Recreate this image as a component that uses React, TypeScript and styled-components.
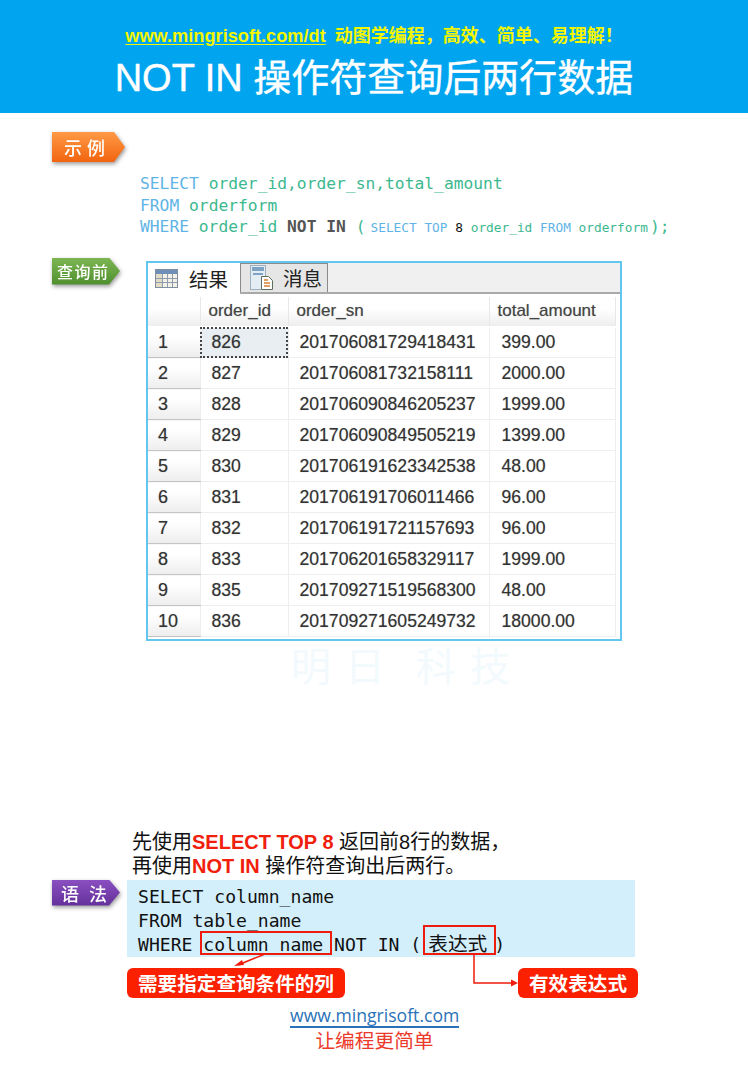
import React from 'react'
import styled, { createGlobalStyle } from 'styled-components'

const sans = `"Liberation Sans", "Noto Sans CJK SC", sans-serif`
const mono = `"DejaVu Sans Mono", "Noto Sans CJK SC", monospace`

const GlobalStyle = createGlobalStyle`
  html, body {
    margin: 0;
    padding: 0;
    background: #fff;
    font-family: ${sans};
  }
`

const Page = styled.div`
  width: 748px;
  height: 1080px;
  overflow: hidden;
`

const Banner = styled.header`
  display: flex;
  flex-direction: column;
  align-items: center;
  height: 113px;
  padding-top: 25px;
  box-sizing: border-box;
  background: #00a4ef;
`

const Slogan = styled.div`
  display: flex;
  align-items: baseline;
  gap: 9px;
  height: 22px;
  font-size: 18px;
  font-weight: 700;
  line-height: 22px;
  color: #f4f500;
`

const SloganLink = styled.span`
  font-size: 18.2px;
  text-decoration: underline;
  text-underline-offset: 2px;
`

const Title = styled.h1`
  margin: 8px 0 0;
  font-size: 38px;
  font-weight: 400;
  line-height: 46px;
  color: #fff;
  white-space: nowrap;
  -webkit-text-stroke: 0.4px #fff;
`

const TagShadow = styled.div<{ $width: number; $height: number }>`
  flex: none;
  width: ${p => p.$width}px;
  height: ${p => p.$height}px;
  filter: drop-shadow(1px 2px 2px rgba(0, 0, 0, 0.4));
`

const TagBody = styled.div<{ $from: string; $to: string; $size: number; $spacing: number; $pad: number }>`
  display: flex;
  align-items: center;
  height: 100%;
  padding-left: ${p => p.$pad}px;
  box-sizing: border-box;
  clip-path: polygon(0 0, calc(100% - 11px) 0, 100% 50%, calc(100% - 11px) 100%, 0 100%);
  background: linear-gradient(${p => p.$from}, ${p => p.$to});
  font-size: ${p => p.$size}px;
  font-weight: 500;
  letter-spacing: ${p => p.$spacing}px;
  color: #fff;
  white-space: nowrap;
`

const ExampleSection = styled.section`
  padding: 19px 0 0 52px;
`

const SqlBlock = styled.pre`
  margin: 11px 0 0 88px;
  font-family: ${mono};
  font-size: 16.3px;
  line-height: 21.5px;
  color: #3cb88f;
`

const Keyword = styled.span`
  color: #5fb4e6;
`

const Operator = styled.span`
  font-weight: 700;
  color: #555;
`

const SubQuery = styled.span`
  margin: 0 2px 0 5px;
  font-size: 12.8px;
`

const Digit = styled.span`
  color: #111;
`

const ResultSection = styled.section`
  display: flex;
  align-items: flex-start;
  gap: 26px;
  padding: 19px 0 0 52px;
`

const ResultPanel = styled.div`
  width: 476px;
  height: 380px;
  margin-top: 3px;
  box-sizing: border-box;
  border: 2px solid #62c6ee;
  background: #fff;
`

const TabStrip = styled.div`
  display: flex;
  align-items: flex-end;
  height: 31px;
  box-sizing: border-box;
  border-bottom: 2px solid #a9a9a9;
  background: #f0f0f0;
`

const Tab = styled.div<{ $active?: boolean }>`
  display: flex;
  align-items: center;
  gap: ${p => (p.$active ? 11 : 9)}px;
  width: ${p => (p.$active ? 92 : 88)}px;
  height: ${p => (p.$active ? 31 : 29)}px;
  padding-left: ${p => (p.$active ? 7 : 9)}px;
  box-sizing: border-box;
  border: ${p => (p.$active ? 'none' : '1px solid #8a8a8a')};
  border-bottom: none;
  background: ${p => (p.$active ? '#fff' : '#e6e6e6')};
  font-size: 19.5px;
  color: #222;
  margin-bottom: ${p => (p.$active ? -2 : 0)}px;
`

const Grid = styled.table`
  width: 467px;
  margin: 3px 0 0;
  border-collapse: collapse;
  table-layout: fixed;
  font-size: 17.6px;
  color: #333;
  text-shadow: 0 0 1px rgba(0, 0, 0, 0.35);
`

const HeadCell = styled.th<{ $width: number }>`
  width: ${p => p.$width}px;
  height: 30px;
  padding: 0 0 0 8px;
  box-sizing: border-box;
  border-right: 1px solid #e8e8e8;
  border-bottom: 2px solid #fff;
  background: linear-gradient(#fff 40%, #eeeeee);
  font-size: 17px;
  font-weight: 400;
  text-align: left;
  color: #444;
`

const RowHead = styled.th`
  height: 31px;
  padding: 0 0 0 10px;
  box-sizing: border-box;
  border-bottom: 1px solid #c4c4c4;
  border-right: 1px solid #eee;
  background: linear-gradient(#fff 30%, #ededed);
  font-size: 18px;
  font-weight: 400;
  text-align: left;
`

const Cell = styled.td<{ $pad: number; $selected?: boolean }>`
  height: 31px;
  padding: 0 0 0 ${p => p.$pad}px;
  box-sizing: border-box;
  border: 1px solid #eeeeee;
  white-space: nowrap;
  ${p => p.$selected && 'outline: 2px dotted #444; outline-offset: -2px; background: #e8eef2;'}
`

const Watermark = styled.div`
  height: 46px;
  margin-top: 3px;
  padding-left: 291px;
  font-size: 40px;
  line-height: 46px;
  letter-spacing: 14px;
  word-spacing: -8px;
  color: #f3fafd;
`

const SyntaxSection = styled.section`
  position: relative;
  margin-top: 140px;
`

const Note = styled.p`
  margin: 0 0 0 132px;
  font-size: 20px;
  line-height: 24px;
  color: #111;
  white-space: nowrap;
`

const NoteMark = styled.span`
  font-weight: 700;
  color: #f0200c;
`

const SyntaxRow = styled.div`
  display: flex;
  align-items: flex-start;
  gap: 7px;
  margin: 2px 0 0 52px;
`

const SyntaxCode = styled.pre`
  width: 508px;
  height: 77px;
  margin: 0;
  padding: 5px 0 0 11px;
  box-sizing: border-box;
  background: #d3effc;
  font-family: ${mono};
  font-size: 18.1px;
  line-height: 24px;
  color: #111;
`

const Expression = styled.span`
  margin: 0 7px;
  font-size: 19.7px;
  line-height: 1;
`

const Mark = styled.div<{ $left: number; $top: number; $width: number; $height: number }>`
  position: absolute;
  left: ${p => p.$left}px;
  top: ${p => p.$top}px;
  width: ${p => p.$width}px;
  height: ${p => p.$height}px;
  box-sizing: border-box;
  border: 2px solid #ee1c0c;
`

const Arrows = styled.svg`
  position: absolute;
  left: 0;
  top: 0;
  pointer-events: none;
`

const Callouts = styled.div`
  display: flex;
  justify-content: space-between;
  width: 511px;
  margin: 11px 0 0 127px;
`

const Callout = styled.div<{ $width: number }>`
  width: ${p => p.$width}px;
  height: 30px;
  border-radius: 6px;
  background: #fa2000;
  font-family: "Noto Sans CJK SC", sans-serif;
  font-size: 19.6px;
  font-weight: 700;
  line-height: 30px;
  text-align: center;
  color: #fff;
  white-space: nowrap;
`

const Footer = styled.footer`
  display: flex;
  flex-direction: column;
  align-items: center;
  width: 169px;
  margin: 7px 0 0 290px;
`

const FooterLink = styled.div`
  width: 100%;
  border-bottom: 2px solid #2a72b8;
  font-family: "Open Sans", sans-serif;
  font-size: 17.6px;
  line-height: 21px;
  text-align: center;
  color: #2a72b8;
  white-space: nowrap;
`

const FooterText = styled.div`
  margin-top: 1px;
  font-size: 19.7px;
  line-height: 24px;
  color: #ec3a2a;
`

const rows = [
  ['826', '201706081729418431', '399.00'],
  ['827', '201706081732158111', '2000.00'],
  ['828', '201706090846205237', '1999.00'],
  ['829', '201706090849505219', '1399.00'],
  ['830', '201706191623342538', '48.00'],
  ['831', '201706191706011466', '96.00'],
  ['832', '201706191721157693', '96.00'],
  ['833', '201706201658329117', '1999.00'],
  ['835', '201709271519568300', '48.00'],
  ['836', '201709271605249732', '18000.00'],
]

const GridIcon = () => (
  <svg width="23" height="19" viewBox="0 0 23 19">
    <rect x="0.5" y="0.5" width="22" height="18" fill="#f4f1e6" stroke="#7f8ea0" />
    <rect x="1" y="1" width="21" height="4" fill="#6f8fb8" />
    <rect x="1" y="5" width="6" height="13" fill="#e3dcc4" />
    <path d="M7.5 5v13M12.5 5v13M17.5 5v13M1 9.5h21M1 13.5h21" stroke="#8c9bad" fill="none" />
  </svg>
)

const MessageIcon = () => (
  <svg width="24" height="25" viewBox="0 0 24 25">
    <rect x="0.5" y="0.5" width="15" height="24" fill="#e4edf4" stroke="#9db0c0" />
    <rect x="2" y="2" width="12" height="4" fill="#7fa3c4" />
    <path d="M3 9h10" stroke="#7fa3c4" strokeWidth="2" />
    <path d="M11.5 11.5h7l4 4v9h-11z" fill="#fff" stroke="#5f6f5f" />
    <path d="M14 15h4M14 18h6M14 21h6" stroke="#d9802f" strokeWidth="1.5" />
  </svg>
)

export default function App() {
  return (
    <Page>
      <GlobalStyle />
      <Banner>
        <Slogan>
          <SloganLink>www.mingrisoft.com/dt</SloganLink>
          <span>动图学编程，高效、简单、易理解！</span>
        </Slogan>
        <Title>NOT IN 操作符查询后两行数据</Title>
      </Banner>

      <ExampleSection>
        <TagShadow $width={73} $height={30}>
          <TagBody $from="#ff9a45" $to="#f2640f" $size={18} $spacing={5} $pad={12}>示例</TagBody>
        </TagShadow>
        <SqlBlock>
          <Keyword>SELECT</Keyword> order_id,order_sn,total_amount{'\n'}
          <Keyword>FROM</Keyword> orderform{'\n'}
          <Keyword>WHERE</Keyword> order_id <Operator>NOT IN</Operator> (
          <SubQuery>
            <Keyword>SELECT TOP</Keyword> <Digit>8</Digit> order_id <Keyword>FROM</Keyword> orderform
          </SubQuery>
          );
        </SqlBlock>
      </ExampleSection>

      <ResultSection>
        <TagShadow $width={68} $height={27}>
          <TagBody $from="#7cb653" $to="#4f8f2e" $size={16} $spacing={1.5} $pad={5}>查询前</TagBody>
        </TagShadow>
        <ResultPanel>
          <TabStrip>
            <Tab $active><GridIcon />结果</Tab>
            <Tab><MessageIcon />消息</Tab>
          </TabStrip>
          <Grid>
            <thead>
              <tr>
                <HeadCell $width={52} />
                <HeadCell $width={88}>order_id</HeadCell>
                <HeadCell $width={201}>order_sn</HeadCell>
                <HeadCell $width={126}>total_amount</HeadCell>
              </tr>
            </thead>
            <tbody>
              {rows.map((row, i) => (
                <tr key={row[0]}>
                  <RowHead>{i + 1}</RowHead>
                  <Cell $pad={11} $selected={i === 0}>{row[0]}</Cell>
                  <Cell $pad={11}>{row[1]}</Cell>
                  <Cell $pad={12}>{row[2]}</Cell>
                </tr>
              ))}
            </tbody>
          </Grid>
        </ResultPanel>
      </ResultSection>

      <Watermark>明日 科技</Watermark>

      <SyntaxSection>
        <Note>先使用<NoteMark>SELECT TOP 8</NoteMark> 返回前8行的数据，</Note>
        <Note>再使用<NoteMark>NOT IN</NoteMark> 操作符查询出后两行。</Note>
        <SyntaxRow>
          <TagShadow $width={68} $height={26}>
            <TagBody $from="#8a4fc0" $to="#63309a" $size={18} $spacing={10} $pad={9}>语法</TagBody>
          </TagShadow>
          <SyntaxCode>
            SELECT column_name{'\n'}FROM table_name{'\n'}WHERE column_name NOT IN (<Expression>表达式</Expression>)
          </SyntaxCode>
        </SyntaxRow>
        <Callouts>
          <Callout $width={218}>需要指定查询条件的列</Callout>
          <Callout $width={120}>有效表达式</Callout>
        </Callouts>
        <Mark $left={200} $top={101} $width={132} $height={24} />
        <Mark $left={423} $top={95} $width={73} $height={30} />
        <Arrows width="748" height="200">
          <path d="M265 124L238 135" stroke="#ee1c0c" strokeWidth="1.5" fill="none" />
          <path d="M234 136l8-6 2 5z" fill="#ee1c0c" />
          <path d="M474 125V153H512" stroke="#ee1c0c" strokeWidth="1.5" fill="none" />
          <path d="M518 153l-7-3.5v7z" fill="#ee1c0c" />
        </Arrows>
        <Footer>
          <FooterLink>www.mingrisoft.com</FooterLink>
          <FooterText>让编程更简单</FooterText>
        </Footer>
      </SyntaxSection>
    </Page>
  )
}
